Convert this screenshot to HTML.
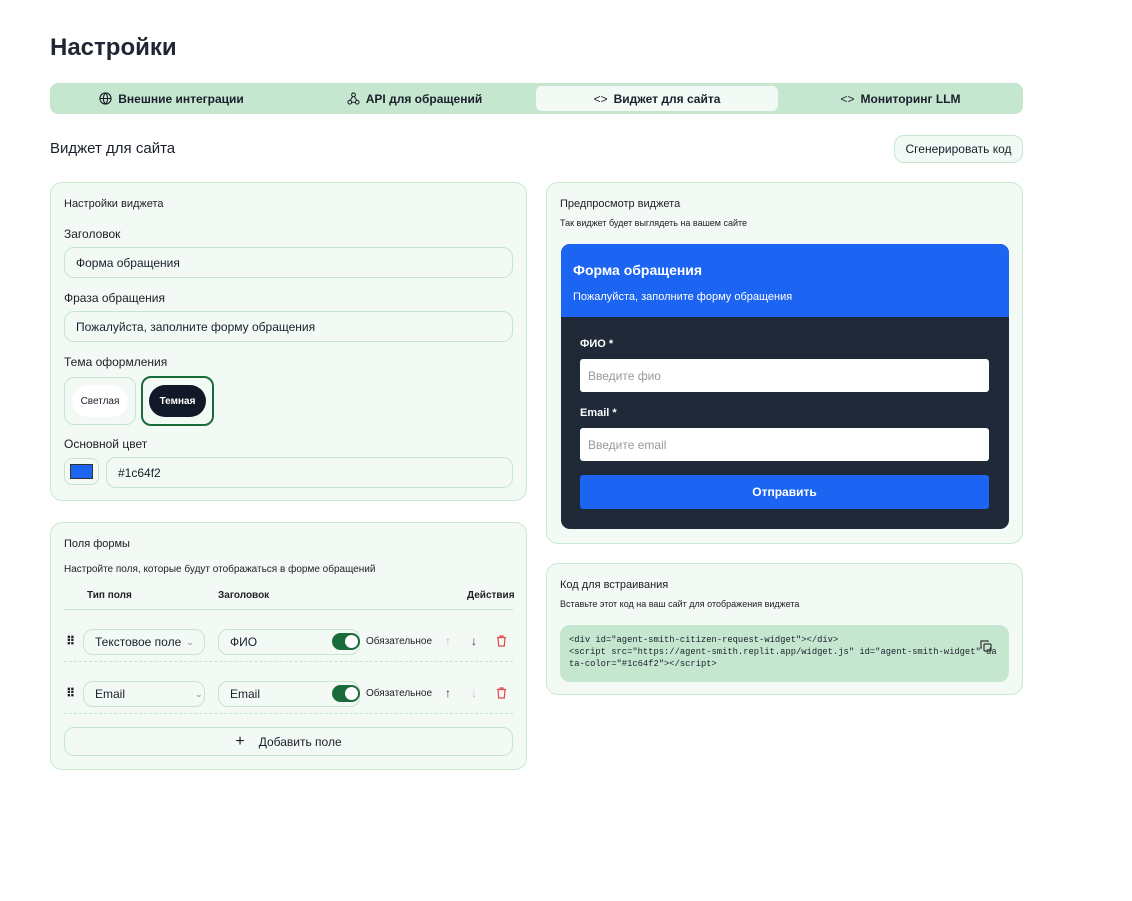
<!DOCTYPE html>
<html><head><meta charset="utf-8"><style>
*{box-sizing:border-box;margin:0;padding:0}
body{width:1132px;height:901px;background:#fff;font-family:"Liberation Sans","DejaVu Sans",sans-serif;color:#1a1f2b;position:relative;overflow:hidden}
.a{position:absolute}
.card{position:absolute;background:#f3f9f5;border:1px solid #c9e9d1;border-radius:12px}
.inp{position:absolute;border:1px solid #c4e6cd;border-radius:10px;background:#f3f9f5;font-size:12px;padding-left:11px;display:flex;align-items:center}
.lbl{position:absolute;font-size:12px;color:#222}
.tab{position:absolute;top:86px;height:25px;display:flex;align-items:center;justify-content:center;font-size:12px;font-weight:bold;gap:6px;color:#1a1f2b}
.sw{position:absolute;width:28px;height:17px;border-radius:9px;background:#1a6b3a}
.sw:after{content:"";position:absolute;right:2px;top:2px;width:13px;height:13px;border-radius:50%;background:#fff}
</style></head><body>
<div class="a" style="left:50px;top:34px;font-size:24px;font-weight:bold;color:#1f2633">Настройки</div>
<div class="a" style="left:50px;top:83px;width:973px;height:31px;background:#c5e7cf;border-radius:8px"></div>
<div class="a" style="left:536px;top:86px;width:242px;height:25px;background:#f3f9f5;border-radius:6px"></div>
<div class="tab" style="left:50px;width:243px"><svg width="13" height="13" viewBox="0 0 14 14" fill="none" stroke="#1a1f2b" stroke-width="1.2"><circle cx="7" cy="7" r="6"/><path d="M1 7h12M7 1c3 3 3 9 0 12M7 1c-3 3-3 9 0 12"/></svg>Внешние интеграции</div>
<div class="tab" style="left:293px;width:243px"><svg width="13" height="13" viewBox="0 0 14 14" fill="none" stroke="#1a1f2b" stroke-width="1.1"><circle cx="7" cy="3" r="2"/><circle cx="3" cy="11" r="2"/><circle cx="11" cy="11" r="2"/><path d="M6 5 3.5 9M5 11h4M8 5l2.5 4"/></svg>API для обращений</div>
<div class="tab" style="left:536px;width:242px"><span style="font-weight:normal">&lt;&gt;</span>Виджет для сайта</div>
<div class="tab" style="left:778px;width:245px"><span style="font-weight:normal">&lt;&gt;</span>Мониторинг LLM</div>
<div class="a" style="left:50px;top:140px;font-size:15px">Виджет для сайта</div>
<div class="a" style="left:894px;top:135px;width:129px;height:28px;border:1px solid #c4e6cd;border-radius:10px;background:#f3f9f5;font-size:12px;display:flex;align-items:center;justify-content:center">Сгенерировать код</div>

<div class="card" style="left:50px;top:182px;width:477px;height:319px"></div>
<div class="lbl" style="left:64px;top:198px;font-size:11px">Настройки виджета</div>
<div class="lbl" style="left:64px;top:227px">Заголовок</div>
<div class="inp" style="left:64px;top:247px;width:449px;height:31px">Форма обращения</div>
<div class="lbl" style="left:64px;top:291px">Фраза обращения</div>
<div class="inp" style="left:64px;top:311px;width:449px;height:31px">Пожалуйста, заполните форму обращения</div>
<div class="lbl" style="left:64px;top:355px">Тема оформления</div>
<div class="a" style="left:64px;top:377px;width:72px;height:48px;border:1px solid #c4e6cd;border-radius:10px;background:#f3f9f5"><div style="margin:7px 7px;height:32px;border-radius:16px;background:#fff;font-size:10px;display:flex;align-items:center;justify-content:center">Светлая</div></div>
<div class="a" style="left:141px;top:376px;width:73px;height:50px;border:2px solid #1a6b3a;border-radius:10px;background:#f3f9f5"><div style="margin:7px 6px;height:32px;border-radius:16px;background:#111827;color:#fff;font-size:10px;display:flex;align-items:center;justify-content:center;font-weight:bold">Темная</div></div>
<div class="lbl" style="left:64px;top:437px">Основной цвет</div>
<div class="a" style="left:64px;top:458px;width:35px;height:27px;border:1px solid #c4e6cd;border-radius:8px;background:#f3f9f5"><div style="margin:5px 5px;height:15px;background:#1c64f2;border:1px solid #333"></div></div>
<div class="inp" style="left:106px;top:457px;width:407px;height:31px">#1c64f2</div>

<div class="card" style="left:50px;top:522px;width:477px;height:248px"></div>
<div class="lbl" style="left:64px;top:538px;font-size:11px">Поля формы</div>
<div class="lbl" style="left:64px;top:564px;font-size:10px">Настройте поля, которые будут отображаться в форме обращений</div>
<div class="lbl" style="left:87px;top:590px;font-size:10px;font-weight:bold">Тип поля</div>
<div class="lbl" style="left:218px;top:590px;font-size:10px;font-weight:bold">Заголовок</div>
<div class="lbl" style="left:467px;top:590px;font-size:10px;font-weight:bold">Действия</div>
<div class="a" style="left:64px;top:609px;width:449px;border-top:1px solid #c4e6cd"></div>
<div class="a" style="left:64px;top:661px;width:449px;border-top:1px dashed #c4e6cd"></div>
<div class="a" style="left:64px;top:713px;width:449px;border-top:1px dashed #c4e6cd"></div>
<div class="lbl" style="left:66px;top:634px;font-size:12px;font-weight:bold;letter-spacing:-2px">⠿</div>
<div class="inp" style="left:83px;top:629px;width:122px;height:26px">Текстовое поле <span style="color:#888;margin-left:5px;font-size:9px">⌄</span></div>
<div class="inp" style="left:218px;top:629px;width:142px;height:26px">ФИО</div>
<div class="sw" style="left:332px;top:633px"></div>
<div class="lbl" style="left:366px;top:636px;font-size:10px">Обязательное</div>
<div class="lbl" style="left:445px;top:634px;color:#bbb">↑</div>
<div class="lbl" style="left:471px;top:634px;color:#333">↓</div>
<svg class="a" style="left:496px;top:635px" width="11" height="12" viewBox="0 0 11 12" fill="none" stroke="#e54848" stroke-width="1.2"><path d="M1 2.5h9M4 2.5V1h3v1.5M2 2.5l.7 8.5h5.6l.7-8.5"/></svg>
<div class="lbl" style="left:66px;top:686px;font-size:12px;font-weight:bold;letter-spacing:-2px">⠿</div>
<div class="inp" style="left:83px;top:681px;width:122px;height:26px">Email<span style="color:#888;margin-left:70px;font-size:9px">⌄</span></div>
<div class="inp" style="left:218px;top:681px;width:142px;height:26px">Email</div>
<div class="sw" style="left:332px;top:685px"></div>
<div class="lbl" style="left:366px;top:688px;font-size:10px">Обязательное</div>
<div class="lbl" style="left:445px;top:686px;color:#333">↑</div>
<div class="lbl" style="left:471px;top:686px;color:#bbb">↓</div>
<svg class="a" style="left:496px;top:687px" width="11" height="12" viewBox="0 0 11 12" fill="none" stroke="#e54848" stroke-width="1.2"><path d="M1 2.5h9M4 2.5V1h3v1.5M2 2.5l.7 8.5h5.6l.7-8.5"/></svg>
<div class="a" style="left:64px;top:727px;width:449px;height:29px;border:1px solid #c4e6cd;border-radius:10px;display:flex;align-items:center;justify-content:center;font-size:12px"><span style="font-size:16px;margin-right:14px">+</span>Добавить поле</div>

<div class="card" style="left:546px;top:182px;width:477px;height:362px"></div>
<div class="lbl" style="left:560px;top:198px;font-size:11px">Предпросмотр виджета</div>
<div class="lbl" style="left:560px;top:218px;font-size:9px">Так виджет будет выглядеть на вашем сайте</div>
<div class="a" style="left:561px;top:244px;width:448px;height:285px;background:#1f2937;border-radius:9px;overflow:hidden">
<div style="background:#1c64f2;height:73px;color:#fff;padding:18px 12px"><div style="font-size:14px;font-weight:bold">Форма обращения</div><div style="font-size:11px;margin-top:13px">Пожалуйста, заполните форму обращения</div></div>
</div>
<div class="lbl" style="left:580px;top:338px;color:#fff;font-size:11px;font-weight:bold">ФИО *</div>
<div class="a" style="left:580px;top:359px;width:409px;height:33px;background:#fff;border-radius:3px;font-size:12px;color:#999;padding:10px 8px">Введите фио</div>
<div class="lbl" style="left:580px;top:407px;color:#fff;font-size:11px;font-weight:bold">Email *</div>
<div class="a" style="left:580px;top:428px;width:409px;height:33px;background:#fff;border-radius:3px;font-size:12px;color:#999;padding:10px 8px">Введите email</div>
<div class="a" style="left:580px;top:475px;width:409px;height:34px;background:#1c64f2;border-radius:3px;font-size:12px;color:#fff;font-weight:bold;display:flex;align-items:center;justify-content:center">Отправить</div>

<div class="card" style="left:546px;top:563px;width:477px;height:132px"></div>
<div class="lbl" style="left:560px;top:579px;font-size:11px">Код для встраивания</div>
<div class="lbl" style="left:560px;top:599px;font-size:9px">Вставьте этот код на ваш сайт для отображения виджета</div>
<div class="a" style="left:560px;top:625px;width:449px;height:57px;background:#c5e7cf;border-radius:10px;font-family:'Liberation Mono',monospace;font-size:8.8px;line-height:12px;padding:9px 10px 9px 9px;color:#1a1f2b;word-break:break-all">&lt;div id="agent-smith-citizen-request-widget"&gt;&lt;/div&gt;<br>&lt;script src="https://agent-smith.replit.app/widget.js" id="agent-smith-widget" data-color="#1c64f2"&gt;&lt;/script&gt;</div>
<svg class="a" style="left:980px;top:640px" width="12" height="12" viewBox="0 0 12 12" fill="none" stroke="#333" stroke-width="1.2"><rect x="4" y="4" width="7" height="7" rx="1"/><path d="M2 8H1V1h7v1"/></svg>
</body></html>
